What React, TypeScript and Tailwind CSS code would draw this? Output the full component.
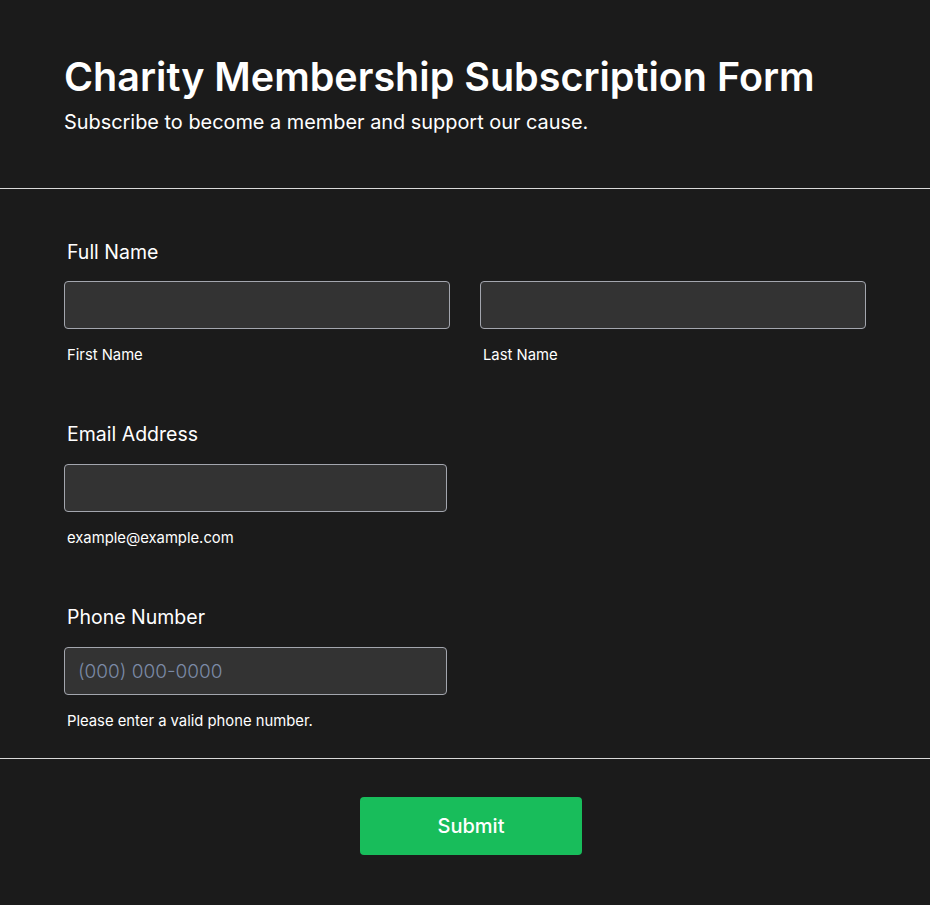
const FORM_TITLE = 'Charity Membership Subscription Form';
const FORM_SUBTITLE = 'Subscribe to become a member and support our cause.';

const inputClass =
  'h-12 w-full rounded-[4px] border border-[#a3a6ae] bg-[#333333] px-[13px] text-[19px] font-light text-white outline-none placeholder:text-[#7b8aa6]';

function FieldLabel({ children }: { children: React.ReactNode }) {
  return <label className="block px-[3px] text-[19.5px] font-normal leading-6 text-white">{children}</label>;
}

function SubLabel({ children }: { children: React.ReactNode }) {
  return <span className="mt-4 block px-[3px] text-[14.8px] leading-5 text-white">{children}</span>;
}

export default function App() {
  return (
    <div className="min-h-[905px] bg-[#1b1b1b] font-['Inter','Liberation_Sans',sans-serif] text-white">
      <header className="px-16 pt-[53px] pb-[52px]">
        <h1 className="text-[39.5px] font-semibold leading-[48px]">{FORM_TITLE}</h1>
        <p className="mt-[7px] text-[19.9px] leading-7">{FORM_SUBTITLE}</p>
      </header>

      <div className="border-t border-[#d9d9d9]" />

      <form className="px-16 pt-[51px] pb-[27px]">
        <div>
          <FieldLabel>Full Name</FieldLabel>
          <div className="mt-[17px] grid grid-cols-2 gap-[30px]">
            <div>
              <input className={inputClass} type="text" />
              <SubLabel>First Name</SubLabel>
            </div>
            <div>
              <input className={inputClass} type="text" />
              <SubLabel>Last Name</SubLabel>
            </div>
          </div>
        </div>

        <div className="mt-[57px]">
          <FieldLabel>Email Address</FieldLabel>
          <div className="mt-[18px] w-[383px]">
            <input className={inputClass} type="email" />
            <SubLabel>example@example.com</SubLabel>
          </div>
        </div>

        <div className="mt-[57px]">
          <FieldLabel>Phone Number</FieldLabel>
          <div className="mt-[18px] w-[383px]">
            <input className={inputClass} type="tel" placeholder="(000) 000-0000" />
            <SubLabel>Please enter a valid phone number.</SubLabel>
          </div>
        </div>
      </form>

      <div className="border-t border-[#d9d9d9]" />

      <div className="flex justify-center pt-[38px] pl-3">
        <button
          type="button"
          className="h-[58px] w-[222px] rounded-[4px] bg-[#18bd5b] text-[20px] font-medium text-white"
        >
          Submit
        </button>
      </div>
    </div>
  );
}
